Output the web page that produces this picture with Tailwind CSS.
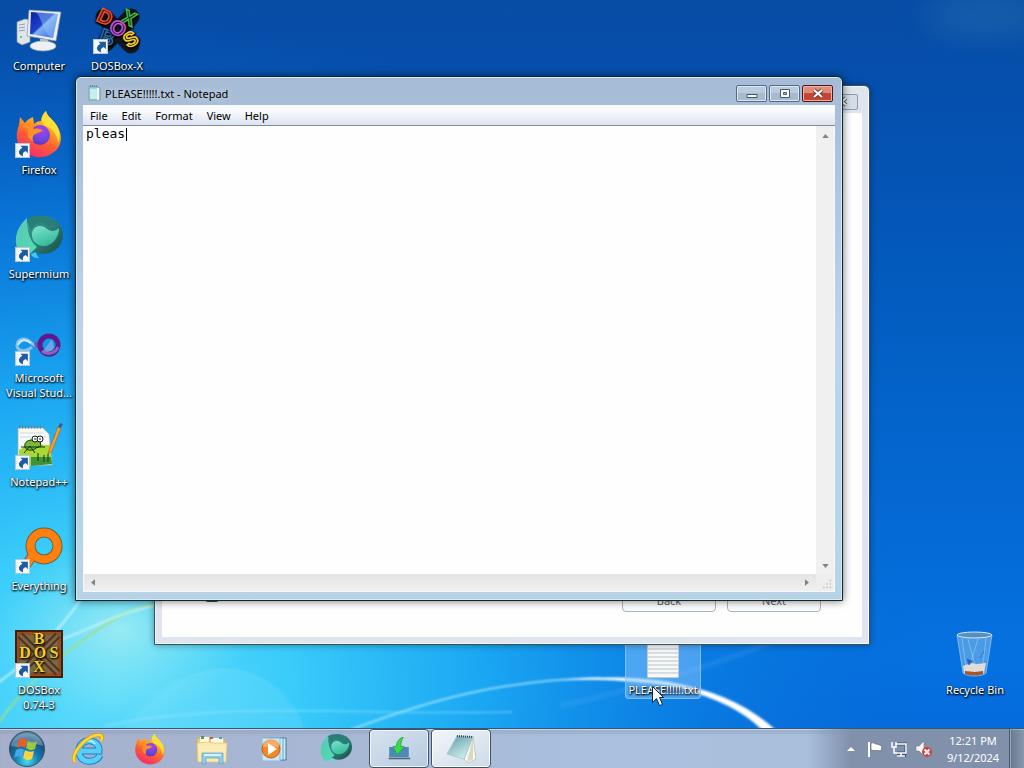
<!DOCTYPE html>
<html lang="en">
<head>
<meta charset="utf-8">
<meta name="viewport" content="width=device-width, initial-scale=1">
<title>Desktop</title>
<script src="https://cdn.jsdelivr.net/npm/@tailwindcss/browser@4"></script>
</head>
<body class="h-screen overflow-hidden bg-[#0868cc] font-['Noto_Sans','Open_Sans',sans-serif] text-[11px] leading-[15px] text-black">

<!-- shared icon definitions -->
<svg class="absolute size-0" aria-hidden="true">
  <defs>
    <linearGradient id="ffBody" x1=".8" y1="0" x2=".3" y2="1"><stop offset="0" stop-color="#ffe83a"/><stop offset=".35" stop-color="#ffa41e"/><stop offset=".65" stop-color="#ff5a35"/><stop offset="1" stop-color="#f02a72"/></linearGradient>
    <radialGradient id="ffCore" cx=".6" cy=".25" r=".9"><stop offset="0" stop-color="#a443f0"/><stop offset=".6" stop-color="#6a45dc"/><stop offset="1" stop-color="#4b2ea8"/></radialGradient>
    <linearGradient id="smDark" x1="0" y1="0" x2="1" y2="1"><stop offset="0" stop-color="#3aa096"/><stop offset=".5" stop-color="#2b8078"/><stop offset="1" stop-color="#1c4a42"/></linearGradient>
    <linearGradient id="smLight" x1="0" y1="0" x2="1" y2="1"><stop offset="0" stop-color="#5cc4b4"/><stop offset="1" stop-color="#4fe0b4"/></linearGradient>
    <linearGradient id="smCore" x1="0" y1="0" x2=".5" y2="1"><stop offset="0" stop-color="#7fe3d0"/><stop offset="1" stop-color="#35bb9c"/></linearGradient>
    <linearGradient id="screen" x1="0" y1="0" x2="1" y2="1"><stop offset="0" stop-color="#0c1d9c"/><stop offset=".45" stop-color="#1b42cf"/><stop offset=".5" stop-color="#7fb2f2"/><stop offset="1" stop-color="#2b5be0"/></linearGradient>
    <symbol id="shortcut" viewBox="0 0 14 14"><rect x=".5" y=".5" width="13" height="13" fill="#f6f9fc" stroke="#b9c6d4"/><path d="M5 2.500h7v7L10 7.500C7.500 8.500 7 10 7.500 12.500 2.500 11 2.500 6.800 7 4.500z" fill="#1d5a9f"/></symbol>
    <symbol id="firefox" viewBox="0 0 48 48">
      <path d="M31 1c1 5 5 7 9 12 8 10 8 22-1 29-8 7-21 7-29 0C1 35 0 25 4 15l1-8 5 6c2-3 5-5 8-6l1 7c2-2 4-3 7-3 0-4 2-7 5-10z" fill="url(#ffBody)"/>
      <path d="M31 1c1 5 5 7 9 12 5 7 6 14 3 20-1-9-5-14-12-17-5-2-6-9 0-15z" fill="#ffdf36"/>
      <circle cx="25" cy="25" r="10" fill="url(#ffCore)"/>
      <path d="M6 16c5-2 10-1 13 3 4-1 7 0 9 2-3 0-4 2-7 3-4 1-4 5-2 8-6-2-8-8-5-13-3-1-5-2-8-3z" fill="#ff9024"/>
    </symbol>
    <symbol id="supermium" viewBox="0 0 48 48">
      <ellipse cx="28" cy="21" rx="20" ry="19" fill="url(#smDark)"/>
      <path d="M12 4C4 11 0 20 1 29c1 8 5 12 10 14l8-7 3-3C13 26 12 13 12 4z" fill="url(#smLight)"/>
      <path d="M16 40c1 3 4 4 8 4-2-2-3-4-3-6z" fill="#62d8e6" opacity=".8"/>
      <path d="M17 19c1-7 9-9 14-5 4 4 9 4 13 0 0 10-7 18-15 18-8 0-13-6-12-13z" fill="url(#smCore)"/>
      <path d="M12 5C20-1 37 0 44 12c-4 3-9 2-12-1-6-5-14-1-15 6-3-4-4-8-5-12z" fill="#287f78"/>
    </symbol>
  </defs>
</svg>

<div class="relative flex h-full flex-col">

  <!-- wallpaper -->
  <svg class="absolute inset-0 size-full" viewBox="0 0 1024 768" preserveAspectRatio="none" aria-hidden="true">
    <defs>
      <linearGradient id="sky" x1="0" y1="0" x2="0" y2="1"><stop offset="0" stop-color="#084ca6"/><stop offset=".2" stop-color="#0452b2"/><stop offset=".5" stop-color="#0362c8"/><stop offset=".85" stop-color="#0571e0"/><stop offset="1" stop-color="#0668dc"/></linearGradient>
      <radialGradient id="glow" gradientUnits="userSpaceOnUse" cx="0" cy="0" r="1" gradientTransform="translate(110 690) scale(820 670)"><stop offset="0" stop-color="#5fdcfb"/><stop offset=".22" stop-color="#3accfa"/><stop offset=".45" stop-color="#1cabf4" stop-opacity=".95"/><stop offset=".72" stop-color="#0b82e4" stop-opacity=".65"/><stop offset="1" stop-color="#0868cc" stop-opacity="0"/></radialGradient>
      <radialGradient id="pale" gradientUnits="userSpaceOnUse" cx="0" cy="0" r="1" gradientTransform="translate(120 630) scale(130 90)"><stop offset="0" stop-color="#b8f3ef" stop-opacity=".7"/><stop offset="1" stop-color="#8aeaf4" stop-opacity="0"/></radialGradient>
      <filter id="soft" x="-10%" y="-10%" width="120%" height="120%"><feGaussianBlur stdDeviation="1"/></filter>
      <filter id="wide" x="-50%" y="-100%" width="200%" height="300%"><feGaussianBlur stdDeviation="14"/></filter>
    </defs>
    <rect width="1024" height="768" fill="url(#sky)"/>
    <rect width="1024" height="768" fill="url(#glow)"/>
    <rect width="1024" height="768" fill="url(#pale)"/>
    <ellipse cx="985" cy="15" rx="60" ry="22" fill="#2b6fae" opacity=".45" filter="url(#wide)"/>
    <g fill="none" filter="url(#soft)">
      <path d="M115 740C150 690 200 665 235 670c35 6 60 30 72 70z" fill="#fff" opacity=".08"/>
      <path d="M118 728C155 685 205 662 245 672c32 10 50 32 58 56" stroke="#c8f6ff" stroke-opacity=".2"/>
      <path d="M-5 728C20 690 55 660 90 635 115 617 135 607 160 603" stroke="#9ae08c" stroke-width="2"/>
      <path d="M-5 685C30 660 60 630 82 598" stroke="#d9fbff" stroke-width="2" stroke-opacity=".8"/>
      <path d="M60 640C100 625 125 610 155 606" stroke="#d9fbff" stroke-width="2" stroke-opacity=".7"/>
      <path d="M105 726C220 700 360 716 512 712" stroke="#a9ecff" stroke-width="2" stroke-opacity=".35"/>
      <path d="M350 730C430 700 500 680 600 678" stroke="#b6eeff" stroke-width="2" stroke-opacity=".7"/>
      <path d="M560 680C600 676 640 677 670 682 715 690 750 706 778 732l-14 0C742 709 712 696 670 686 630 680 600 679 560 680z" fill="#fff"/>
      <path d="M560 706C630 690 720 665 800 630" stroke="#7dc6ff" stroke-width="6" stroke-opacity=".12"/>
    </g>
  </svg>

  <main class="relative min-h-0 flex-1" aria-label="Desktop">

    <!-- icon columns -->
    <div class="absolute inset-y-0 left-0 grid auto-cols-[78px] grid-flow-col grid-rows-[repeat(7,104px)] text-center text-white [&>button]:[text-shadow:0_1px_2px_#000,1px_1px_2px_#000]">
      <button class="flex flex-col items-center gap-1 pt-[6px]">
        <svg class="size-12 shrink-0" viewBox="0 0 48 48" aria-hidden="true">
          <path d="M2 16l8-3 5 1v22l-8 3-5-3z" fill="#dfe5ea" stroke="#8b98a5" stroke-width=".7"/><path d="M4 19l6-1M4 22l6-1M4 25l6-1" stroke="#8fa3b3"/><circle cx="6" cy="31" r="1" fill="#4ac04a"/>
          <path d="M25 33h8l1 6h-9z" fill="#b8c2c9"/><ellipse cx="28" cy="40" rx="13" ry="5" fill="#edf1f3" stroke="#98a5ae" stroke-width=".7"/>
          <path d="M14 4l32 2-5 29-29-5z" fill="#e9eef1" stroke="#8995a0" stroke-width=".7"/><path d="M16 6l27 2-5 24-23-4z" fill="url(#screen)"/><path d="M21 6c7 8 5 16 14 25l3 1 5-24z" fill="#9cc7fa" opacity=".45"/>
        </svg>
        <span>Computer</span>
      </button>
      <button class="flex flex-col items-center gap-1 pt-[6px]">
        <span class="relative"><svg class="size-12" viewBox="0 0 48 48" aria-hidden="true"><use href="#firefox"/></svg><svg class="absolute bottom-0 left-0 size-[15px]" aria-hidden="true"><use href="#shortcut"/></svg></span>
        <span>Firefox</span>
      </button>
      <button class="flex flex-col items-center gap-1 pt-[6px]">
        <span class="relative"><svg class="size-12" viewBox="0 0 48 48" aria-hidden="true"><use href="#supermium"/></svg><svg class="absolute bottom-0 left-0 size-[15px]" aria-hidden="true"><use href="#shortcut"/></svg></span>
        <span>Supermium</span>
      </button>
      <button class="flex flex-col items-center gap-1 pt-[6px]">
        <span class="relative"><svg class="size-12" viewBox="0 0 48 48" fill="none" aria-hidden="true">
          <path d="M17 29C12 34 3 34 2 28c0-8 9-9 13-4 4 3 6 5 10 3" stroke="#86c2ec" stroke-width="3"/><path d="M3 27c3-6 8-6 13-2" stroke="#d4ecfb" stroke-width="2"/>
          <path d="M19 25l6-3v9l-5-2z" fill="#6b5aa8"/><circle cx="34" cy="27" r="9" stroke="#5c1b8f" stroke-width="5"/><path d="M27 33c5 5 14 2 16-4" stroke="#8a63bd" stroke-width="3"/><path d="M28 33l9-12 2 9c-3 4-7 5-11 3z" fill="#9fb0ea" opacity=".6"/>
        </svg><svg class="absolute bottom-0 left-0 size-[15px]" aria-hidden="true"><use href="#shortcut"/></svg></span>
        <span>Microsoft<br>Visual Stud...</span>
      </button>
      <button class="flex flex-col items-center gap-1 pt-[6px]">
        <span class="relative"><svg class="size-12" viewBox="0 0 48 48" aria-hidden="true">
          <path d="M3 6h25l6 6 3 31-34 1z" fill="#f7faf6" stroke="#a2ada2" stroke-width=".7"/><path d="M4 5h24" stroke="#6d7b84" stroke-width="3" stroke-dasharray="1 2"/><path d="M5 11h23M5 15h26" stroke="#ccd8e0"/>
          <path d="M4 28c11-7 20-5 31-5l2 19-33 2z" fill="#a7d936"/><path d="M16 35h20l1 7-21 2z" fill="#3c9434"/>
          <path d="M17 18c-6 0-8 4-7 7 1 4 8 4 11 1l5-2-1-5z" fill="#77bd32" stroke="#18320e"/><circle cx="20" cy="17" r="3" fill="#fff" stroke="#111"/><circle cx="25" cy="17" r="3" fill="#fff" stroke="#111"/><path d="M20 16v2M25 16v2M6 25h24M9 31l6-7 5 7M23 31v8M29 33v7M33 32v8" stroke="#17310e" fill="none"/>
          <path d="M34 28L43 5l3 1-9 23-4 3z" fill="#f6a033" stroke="#a85c16" stroke-width=".6"/><path d="M43 5l2-4 3 1-2 4z" fill="#3c5b9a"/>
        </svg><svg class="absolute bottom-0 left-0 size-[15px]" aria-hidden="true"><use href="#shortcut"/></svg></span>
        <span>Notepad++</span>
      </button>
      <button class="flex flex-col items-center gap-1 pt-[6px]">
        <span class="relative"><svg class="size-12" viewBox="0 0 48 48" fill="none" aria-hidden="true">
          <path d="M18 29L11 39" stroke="#7b5a2a" stroke-width="10"/><circle cx="29" cy="20" r="13.500" stroke="#6a6335" stroke-width="10"/><path d="M18 29L12 38" stroke="#ff8011" stroke-width="8"/><circle cx="29" cy="20" r="13.500" stroke="#ff8011" stroke-width="8"/>
        </svg><svg class="absolute bottom-0 left-0 size-[15px]" aria-hidden="true"><use href="#shortcut"/></svg></span>
        <span>Everything</span>
      </button>
      <button class="flex flex-col items-center gap-1 pt-[6px]">
        <span class="relative"><svg class="size-12" viewBox="0 0 48 48" aria-hidden="true">
          <rect width="48" height="48" fill="#40210f"/><rect x="2" y="2" width="44" height="44" fill="#944d1d"/><rect x="5" y="5" width="38" height="38" fill="#7a6843"/><path d="M5 5l38 38M43 5L5 43" stroke="#4b3423" stroke-width="7"/><path d="M5 5l38 38M43 5L5 43" stroke="#816344" stroke-width="3"/>
          <g fill="#f5cf28" class="font-['Liberation_Serif',serif] text-[16px] font-bold" text-anchor="middle"><text x="24" y="14">B</text><text x="10" y="28">D</text><text x="25" y="28">O</text><text x="39" y="28">S</text><text x="24" y="42">X</text></g>
        </svg><svg class="absolute bottom-0 left-0 size-[15px]" aria-hidden="true"><use href="#shortcut"/></svg></span>
        <span>DOSBox<br>0.74-3</span>
      </button>
      <button class="flex flex-col items-center gap-1 pt-[6px]">
        <span class="relative"><svg class="size-12" viewBox="0 0 48 48" aria-hidden="true">
          <path d="M11 11l27 28M38 11L13 37" stroke="#121620" stroke-width="17" stroke-linecap="round"/>
          <g class="font-['Liberation_Sans',sans-serif] text-[20px] font-bold" text-anchor="middle" stroke-width="1.500"><text x="12" y="18" fill="#e94e32" stroke="#e94e32" transform="rotate(25 12 11)">D</text><text x="36" y="19" fill="#46b843" stroke="#46b843" transform="rotate(25 36 12)">X</text><text x="14" y="38" fill="#2f6fae" stroke="#2f6fae" transform="rotate(20 14 32)">B</text><text x="25" y="29" fill="#c758df" stroke="#c758df" transform="rotate(30 25 22)">O</text><text x="38" y="40" fill="#f8cf32" stroke="#f8cf32" transform="rotate(-30 38 34)">S</text></g>
        </svg><svg class="absolute bottom-0 left-0 size-[15px]" aria-hidden="true"><use href="#shortcut"/></svg></span>
        <span>DOSBox-X</span>
      </button>
    </div>

    <button class="absolute right-3 bottom-[31px] flex w-[74px] flex-col items-center gap-1 text-white [text-shadow:0_1px_2px_#000,1px_1px_2px_#000]">
      <svg class="size-12" viewBox="0 0 48 48" aria-hidden="true">
        <path d="M6 5l6 38c4 4 19 4 23 0l6-38z" fill="#a4cff0" fill-opacity=".45" stroke="#aed6f0" stroke-width=".6"/><path d="M11 8l5 36M35 8l-4 35M17 9l8 30M27 9l-9 29" stroke="#e6f7ff" stroke-opacity=".3"/><path d="M12 36l8-3 6 1 9-1-2 10c-3 3-16 3-20 0z" fill="#dddcd7"/><path d="M14 41l10 1 8-1v3c-4 2-13 2-18 0z" fill="#a4572e"/><path d="M16 29l5 2-3 4zM29 28l4-7" fill="#245fbd" stroke="#2864bb" stroke-width=".7"/><ellipse cx="23.500" cy="5" rx="17.500" ry="3" fill="#5790be" stroke="#d4e7f2"/>
      </svg>
      <span class="whitespace-nowrap">Recycle Bin</span>
    </button>

    <!-- selected file with the pointer over it -->
    <button class="absolute top-[624px] left-[625px] flex w-[76px] flex-col items-center gap-1 rounded-sm border border-[#8cc5fa]/80 bg-[#8cc5ff]/50 pb-px text-white [text-shadow:0_1px_2px_#000,1px_1px_2px_#000]">
      <svg class="h-[53px] w-8" viewBox="0 0 32 53" aria-hidden="true"><path d="M0 0h32v53H0z" fill="#f7f8f8" stroke="#8c9ca8"/><path d="M1 24h30M1 28h30M1 32h30M1 36h30M1 40h30M1 44h30M1 48h30" stroke="#b8c1c8"/></svg>
      <span class="whitespace-nowrap">PLEASE!!!!!.txt</span>
    </button>

    <!-- window behind: installer wizard -->
    <section class="absolute top-[85px] left-[154px] flex h-[560px] w-[716px] flex-col rounded-t-md border border-[#34525f] bg-[#dfe4ee] px-[7px] pb-[7px] shadow-[inset_0_0_0_1px_#f4f8fb,0_0_7px_#00000060]" aria-label="Setup wizard">
      <header class="flex h-[27px] shrink-0 items-center justify-end pt-1 pr-1"><button class="flex h-4 w-8 items-center justify-center rounded-xs border border-[#8f9dac] bg-[#d3dde8]" aria-label="Close wizard"><svg class="h-[11px] w-3" viewBox="0 0 12 11"><path d="M2 2l8 7M10 2L2 9" stroke="#596671" stroke-width="4"/><path d="M2 2l8 7M10 2L2 9" stroke="#fff" stroke-width="2"/></svg></button></header>
      <div class="flex min-h-0 flex-1 items-end justify-end gap-[11px] bg-[#fefefe] pr-[41px] pb-[25px] text-[#5c6267]">
        <svg class="mr-auto ml-10 h-9 w-5" viewBox="0 0 20 36" aria-hidden="true"><rect x="3" y="10" width="14" height="16" rx="3" fill="#2c4a4c"/></svg>
        <button class="h-[23px] w-[94px] rounded-sm border border-[#a9b4bb] bg-[#fafcfd]">Back</button>
        <button class="h-[23px] w-[94px] rounded-sm border border-[#a9b4bb] bg-[#fafcfd]">Next</button>
      </div>
    </section>

    <!-- Notepad -->
    <section class="absolute top-[76px] left-[75px] flex h-[525px] w-[768px] flex-col rounded-t-md border border-[#11242f] bg-linear-to-b from-[#a6bbd5] via-[#bdd4ec] to-[#b8d3e6] px-[7px] pb-[8px] shadow-[inset_0_0_0_1px_#d0ecf8,0_0_8px_#00000090]" aria-label="Notepad">
      <header class="flex h-7 shrink-0 items-center gap-[2px] pl-1">
        <svg class="mt-1 size-4" viewBox="0 0 16 16" aria-hidden="true"><path d="M2 2h9l2 1v12H2z" fill="#9cd9d6" stroke="#6c999b" stroke-width=".7"/><path d="M3 4h7v10H3z" fill="#c5eeec"/><path d="M11 3v12" stroke="#eff8f8" stroke-width="2"/><path d="M3 1h8" stroke="#35525c" stroke-width="1" stroke-dasharray="1 1"/></svg>
        <h1 class="mt-1 [text-shadow:0_0_6px_#ffffffb0]">PLEASE!!!!!.txt - Notepad</h1>
        <div class="ml-auto flex gap-[2px] pt-1 pr-[2px]">
          <button class="flex h-[17px] w-[31px] items-center justify-center rounded-xs border border-[#536b86] bg-linear-to-b from-[#bccce0] from-50% to-[#a6bad2] to-50% shadow-[inset_0_0_0_1px_#dce7f3]" aria-label="Minimize"><svg class="h-3 w-3" viewBox="0 0 12 12"><path d="M1 7.500h10v3H1z" fill="#fff" stroke="#4b5667"/></svg></button>
          <button class="flex h-[17px] w-[31px] items-center justify-center rounded-xs border border-[#536b86] bg-linear-to-b from-[#bccce0] from-50% to-[#a6bad2] to-50% shadow-[inset_0_0_0_1px_#dce7f3]" aria-label="Maximize"><svg class="h-3 w-3" viewBox="0 0 12 12"><path d="M1.500 2.500h9v8h-9zM4.500 5.500h3v2h-3z" fill="#fff" fill-rule="evenodd" stroke="#4b5667"/></svg></button>
          <button class="flex h-[17px] w-[31px] items-center justify-center rounded-xs border border-[#4d1715] bg-linear-to-b from-[#e08b7a] from-50% to-[#c64532] to-50% shadow-[inset_0_0_0_1px_#edb3a6]" aria-label="Close"><svg class="h-[11px] w-3" viewBox="0 0 12 11"><path d="M2 2l8 7M10 2L2 9" stroke="#6d3937" stroke-width="4"/><path d="M2 2l8 7M10 2L2 9" stroke="#fff" stroke-width="2"/></svg></button>
        </div>
      </header>
      <nav class="flex h-[21px] shrink-0 items-center gap-[14px] border-b border-[#818b9b] bg-linear-to-b from-[#f8fafd] from-30% to-[#dce2ef] pl-[7px]" aria-label="Menu bar">
        <button>File</button><button>Edit</button><button>Format</button><button>View</button><button>Help</button>
      </nav>
      <div class="grid min-h-0 flex-1 grid-cols-[1fr_18px] grid-rows-[1fr_17px] border border-t-0 border-[#f4f9fc] bg-[#eeeeef]">
        <div class="relative">
          <textarea class="block size-full resize-none overflow-hidden bg-[#fefefe] pl-[2px] font-['DejaVu_Sans_Mono',monospace] text-[13px] leading-[16px] outline-none" aria-label="Document text" spellcheck="false">pleas</textarea>
          <span class="absolute top-[2px] left-[42px] h-[13px] w-px bg-black"></span>
        </div>
        <div class="flex flex-col items-center justify-between bg-[#f0f0f0] pt-2 pb-[6px]" aria-hidden="true">
          <svg class="h-1 w-[7px]" viewBox="0 0 8 5"><path d="M0 5l4-5 4 5z" fill="#7c8288"/></svg><svg class="h-1 w-[7px]" viewBox="0 0 8 5"><path d="M0 0h8L4 5z" fill="#7c8288"/></svg>
        </div>
        <div class="flex items-center justify-between bg-linear-to-b from-[#e4e4e5] to-[#f0f0f0] px-[7px]" aria-hidden="true">
          <svg class="h-[7px] w-1" viewBox="0 0 5 8"><path d="M5 0L0 4l5 4z" fill="#7c8288"/></svg><svg class="h-[7px] w-1" viewBox="0 0 5 8"><path d="M0 0l5 4-5 4z" fill="#7c8288"/></svg>
        </div>
        <div class="flex items-end justify-end p-[2px]" aria-hidden="true"><svg class="size-[10px]" viewBox="0 0 12 12"><path d="M9 1h2v2H9zM5 5h2v2H5zM9 5h2v2H9zM1 9h2v2H1zM5 9h2v2H5zM9 9h2v2H9z" fill="#c4c8cb"/></svg></div>
      </div>
    </section>

    <svg class="absolute top-[686px] left-[652px] h-5 w-3" viewBox="0 0 12 20" aria-hidden="true"><path d="M.5.5v16l4-4 3 7 3-1-3-7h4z" fill="#fff" stroke="#182433"/></svg>
  </main>

  <!-- taskbar -->
  <footer class="relative flex h-10 shrink-0 items-stretch border-t border-[#31597a] bg-linear-to-r from-[#a5afca] via-[#a9c0de] via-60% to-[#a9c0dc] shadow-[inset_0_1px_0_#d8e4f1b0,inset_0_5px_2px_#8e9bb560]">
    <nav class="flex gap-[2px]" aria-label="Taskbar">
      <button class="mr-[2px] flex w-[54px] items-center justify-center" aria-label="Start"><svg class="size-9" viewBox="0 0 36 36"><defs><radialGradient id="orb" cx=".5" cy=".85" r=".85"><stop offset="0" stop-color="#42ddee"/><stop offset=".4" stop-color="#147cb1"/><stop offset=".75" stop-color="#184d7b"/><stop offset="1" stop-color="#5e8dac"/></radialGradient></defs><circle cx="18" cy="18" r="17.500" fill="url(#orb)" stroke="#35506b"/><path d="M2 15C5-2 31-2 34 15 24 10 12 18 2 15z" fill="#d6e8f1" opacity=".35"/><path d="M10 9c3-2 6-2 8 0l-2 8c-3-2-5-2-8 0z" fill="#f05a25"/><path d="M19 10c3 2 6 2 9 0l-2 8c-4 2-6 1-9-1z" fill="#9dc839"/><path d="M7 19c3-2 6-2 8 0l-2 8c-3-2-5-2-8 0z" fill="#43a7e8"/><path d="M16 19c3 2 6 2 9 1l-2 8c-4 2-6 1-9-1z" fill="#ffd33d"/></svg></button>
      <button class="flex w-[60px] items-center justify-center" aria-label="Internet Explorer"><svg class="h-8 w-8" viewBox="0 0 32 32" fill="none"><path d="M28 22c-4 9-21 9-21-4 0-14 21-13 20 0H9" stroke="#1b83c9" stroke-width="7"/><path d="M28 22c-4 9-21 9-21-4 0-14 21-13 20 0H9" stroke="#58cef8" stroke-width="5"/><path d="M9 11c5-5 11-4 14 0" stroke="#b4effe" stroke-width="2"/><path d="M3 29C-3 22 15 1 27 2c3 0 4 2 2 6" stroke="#d69b12" stroke-width="4"/><path d="M3 29C-3 22 15 1 27 2c3 0 4 2 2 6" stroke="#ffd736" stroke-width="2.500"/></svg></button>
      <button class="flex w-[60px] items-center justify-center" aria-label="Firefox"><svg class="size-8" viewBox="0 0 48 48"><use href="#firefox"/></svg></button>
      <button class="flex w-[60px] items-center justify-center" aria-label="Windows Explorer"><svg class="size-8" viewBox="0 0 32 32"><path d="M1 9V5h8l2 1h18v22H1z" fill="#e8cb78" stroke="#c8a95a" stroke-width=".7"/><path d="M4 4h9v7H4zM15 5h12v6H15z" fill="#fffbe0"/><path d="M5 3h3v3H5z" fill="#539c52"/><path d="M14 4h3v2h-3z" fill="#cc5a3e"/><path d="M23 4h3v2h-3z" fill="#4a9bca"/><path d="M1 10l12-1 2 1h16l-1 19H2z" fill="#fbeaac" stroke="#dcc27a" stroke-width=".7"/><path d="M3 14h27M3 17h27" stroke="#f9f3cc"/><path d="M6 31V20h21v11h-4v-6H10v6z" fill="#8fcdec" stroke="#5f9fc2" stroke-width=".7"/><path d="M8 22h17" stroke="#d8f2fb" stroke-width="2"/></svg></button>
      <button class="flex w-[60px] items-center justify-center" aria-label="Windows Media Player"><svg class="h-7 w-8" viewBox="0 0 32 28"><path d="M10 3h18v22H10z" fill="#d0eafa" stroke="#3d78a4"/><path d="M7 3h18v22H7z" fill="#d0eafa" stroke="#63a2ca"/><path d="M4 3h18v23H4z" fill="#cce5f3" stroke="#90b9d2"/><circle cx="13" cy="14" r="9" fill="#f18825" stroke="#c75d10"/><path d="M5 12a8 8 0 0 1 16 0z" fill="#f9bd7b" opacity=".7"/><path d="M10 8l9 6-9 6z" fill="#fff"/></svg></button>
      <button class="flex w-[60px] items-center justify-center" aria-label="Supermium"><svg class="size-8" viewBox="0 0 48 48"><use href="#supermium"/></svg></button>
      <button class="ml-px flex w-[60px] items-center justify-center rounded-sm border border-[#40536a] bg-linear-to-br from-[#d9e2ee] to-[#b5cae1] shadow-[inset_0_0_0_1px_#eff5fa]" aria-label="Setup wizard"><svg class="size-6" viewBox="0 0 28 28"><path d="M2 11h24v13H2z" fill="#4b89b8" stroke="#d8e3ec"/><path d="M2 25h25" stroke="#526575" stroke-width="2"/><path d="M19 0c-6 2-8 7-8 11H7l5 10 8-10h-4c0-4 1-7 3-11z" fill="#38dc45" stroke="#2da54c"/></svg></button>
      <button class="flex w-[60px] items-center justify-center rounded-sm border border-[#40536a] bg-linear-to-br from-[#f3f6f9] to-[#cddbe9] shadow-[inset_0_0_0_1px_#fff]" aria-label="PLEASE!!!!!.txt - Notepad"><svg class="size-8" viewBox="0 0 32 32"><defs><linearGradient id="pad" x1="0" y1="0" x2=".6" y2="1"><stop offset="0" stop-color="#5d9aa6"/><stop offset="1" stop-color="#d2eff0"/></linearGradient></defs><path d="M28 3l3 23-8 4-4-4z" fill="#f9f8eb" stroke="#b4b6a2" stroke-width=".7"/><path d="M28 4v22l-6 3z" fill="#d5d8c6"/><path d="M12 3l16 1-9 22L2 21z" fill="url(#pad)" stroke="#9fc2c8" stroke-width=".7"/><path d="M12 3l16 1" stroke="#3b4e50" stroke-width="2" stroke-dasharray="1 1"/></svg></button>
    </nav>
    <div class="ml-auto flex items-center bg-linear-to-r from-transparent to-[#8191ac] to-20% pl-9 text-white">
      <div class="flex items-center gap-2">
        <button class="flex h-8 w-4 items-center justify-center" aria-label="Show hidden icons"><svg class="h-1 w-2" viewBox="0 0 8 4"><path d="M0 4l4-4 4 4z" fill="#fff"/></svg></button>
        <button aria-label="Action Center"><svg class="size-4" viewBox="0 0 16 16"><path d="M2 1v15" stroke="#fff" stroke-width="2"/><path d="M4 2c4-1 4 2 6 1l5 2-1 5c-4-1-6 0-10-1z" fill="#fff" stroke="#4a5a70" stroke-width=".6"/></svg></button>
        <button aria-label="Network"><svg class="size-4" viewBox="0 0 16 16" fill="none"><path d="M5 3h10v9H6M10 12v2M6 15h9" stroke="#40516b" stroke-width="3"/><path d="M5 3h10v9H6M10 12v3M6 15h8M1 1v5h4V1M3 6v6h3" stroke="#fff" stroke-width="1.500"/></svg></button>
        <button aria-label="Volume"><svg class="size-[18px]" viewBox="0 0 18 18"><path d="M1 6h3l5-5v15l-5-5H1z" fill="#f5f5f5" stroke="#6d7a8b" stroke-width=".6"/><circle cx="12" cy="12" r="5" fill="#d83e36"/><path d="M9.500 9.500l5 5M14.500 9.500l-5 5" stroke="#fff" stroke-width="2"/></svg></button>
      </div>
      <button class="flex w-[76px] flex-col items-center gap-[2px] pl-1"><span>12:21 PM</span><span>9/12/2024</span></button>
      <button class="h-full w-[15px] border-l border-[#4a5b72] bg-linear-to-r from-[#67788c] to-[#8899ae] shadow-[inset_1px_1px_0_#c4d1e080]" aria-label="Show desktop"></button>
    </div>
  </footer>
</div>
</body>
</html>
